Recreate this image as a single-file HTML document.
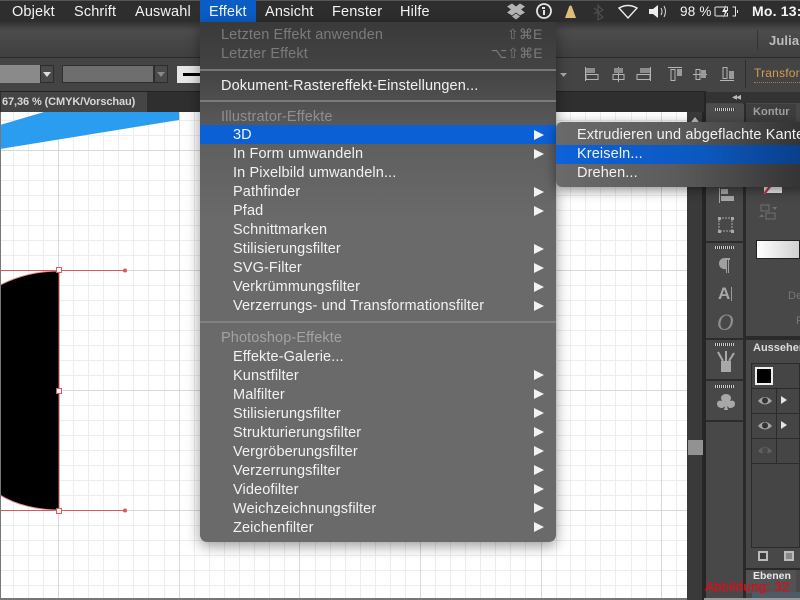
<!DOCTYPE html>
<html><head><meta charset="utf-8">
<style>
html,body{margin:0;padding:0;width:800px;height:600px;overflow:hidden;background:#444}
#s{position:relative;width:800px;height:600px;overflow:hidden;font-family:"Liberation Sans",sans-serif;filter:blur(.35px)}
.a{position:absolute}
.t{position:absolute;white-space:nowrap;font-size:14.5px;line-height:19px;color:#f2f2f2;letter-spacing:.12px}
.t:not([style*="font-size"]){margin-top:1px}
.mb{color:#f4f4f4;line-height:22px;top:0;font-size:14.5px;letter-spacing:.15px}
.d{color:#7b7b7b}
.g{color:#8f8f8f}
.tr{position:absolute;left:534px;width:0;height:0;border-left:10px solid #f2f2f2;border-top:5px solid transparent;border-bottom:5px solid transparent}
.sep{position:absolute;left:200px;width:356px;height:2px;background:#8a8a8a;opacity:.75}
</style></head><body><div id="s">

<!-- toolbars -->
<div class="a" style="left:0;top:22px;width:800px;height:35px;background:linear-gradient(#333,#4c4c4c 25%,#3f3f3f)"></div>
<div class="a" style="left:0;top:57px;width:800px;height:34px;background:#444;border-top:1px solid #2a2a2a"></div>
<div class="a" style="left:0;top:91px;width:706px;height:21px;background:#2f2f2f;border-top:1px solid #222"></div>
<div class="a" style="left:1px;top:92px;width:146px;height:20px;background:#454545"></div>
<div class="t" style="left:2px;top:93px;font-size:11px;font-weight:bold;color:#d8d8d8;letter-spacing:-.1px">67,36 % (CMYK/Vorschau)</div>

<div class="a" style="left:0;top:65px;width:40px;height:18px;background:#8a8a8a"></div>
<div class="a" style="left:40px;top:65px;width:14px;height:18px;background:#4a4a4a;border:1px solid #2c2c2c;box-sizing:border-box"></div>
<div class="a" style="left:43px;top:72px;border-top:5px solid #ddd;border-left:4px solid transparent;border-right:4px solid transparent"></div>
<div class="a" style="left:62px;top:65px;width:92px;height:18px;background:#6e6e6e;border:1px solid #2f2f2f;box-sizing:border-box"></div>
<div class="a" style="left:154px;top:65px;width:14px;height:18px;background:#4a4a4a;border:1px solid #2c2c2c;box-sizing:border-box"></div>
<div class="a" style="left:157px;top:72px;border-top:5px solid #888;border-left:4px solid transparent;border-right:4px solid transparent"></div>
<div class="a" style="left:177px;top:66px;width:24px;height:17px;background:#e6e6e6"></div>
<div class="a" style="left:183px;top:73px;width:18px;height:3px;background:#000"></div>

<svg class="a" style="left:556px;top:22px" width="244" height="90" fill="none" stroke="#b5b5b5" stroke-width="1">
  <path d="M4 51h7l-3.500 4z" fill="#aaa" stroke="none"/>
  <path d="M29.500 45v14M30 52.500h12v5H30z"/><rect x="30" y="46" width="9" height="5" fill="#8c8c8c" stroke="none"/>
  <path d="M62.500 45v15M57 52.500h11v5H57z"/><rect x="58" y="46" width="9" height="5" fill="#8c8c8c" stroke="none"/>
  <path d="M94.500 45v14M81 52.500h13v5H81z"/><rect x="84" y="46" width="10" height="5" fill="#8c8c8c" stroke="none"/>
  <path d="M112 45.500h14M115 47.500h4v11h-4z"/><rect x="121" y="47" width="5" height="7" fill="#9a9a9a" stroke="none"/>
  <path d="M137 52.500h14M140 47.500h4v10h-4z"/><rect x="145" y="48" width="5" height="8" fill="#9a9a9a" stroke="none"/>
  <path d="M164 58.500h14M167 45.500h4v11h-4z"/><rect x="173" y="49" width="5" height="8" fill="#9a9a9a" stroke="none"/>
  <path d="M189.500 38v28" stroke="#2e2e2e"/><path d="M201.500 8v20" stroke="#333"/>
</svg>
<div class="t" style="left:754px;top:65px;font-size:12px;color:#d99a4e;letter-spacing:.2px;border-bottom:1px dotted #a87a40;line-height:17px">Transform</div>
<div class="t" style="left:769px;top:31px;font-size:13px;font-weight:bold;color:#bcbcbc">Julia</div>

<!-- canvas -->
<svg class="a" style="left:0;top:112px" width="688" height="488">
  <rect x="0" y="0" width="688" height="488" fill="#fff"/>
  <g id="grid" stroke="#ededed" stroke-width="1">
    <path d="M13.500 0v488M28.500 0v488M43.500 0v488M73.500 0v488M88.500 0v488M103.500 0v488M118.500 0v488M133.500 0v488M148.500 0v488M164.500 0v488M194.500 0v488M209.500 0v488M224.500 0v488M239.500 0v488M254.500 0v488M269.500 0v488M284.500 0v488M315.500 0v488M330.500 0v488M345.500 0v488M360.500 0v488M375.500 0v488M390.500 0v488M405.500 0v488M435.500 0v488M450.500 0v488M465.500 0v488M480.500 0v488M495.500 0v488M510.500 0v488M525.500 0v488M556.500 0v488M570.500 0v488M585.500 0v488M600.500 0v488M615.500 0v488M631.500 0v488M646.500 0v488M676.500 0v488"/>
    <path d="M0 8.500h688M0 23.500h688M0 53.500h688M0 68.500h688M0 83.500h688M0 98.500h688M0 113.500h688M0 128.500h688M0 143.500h688M0 173.500h688M0 188.500h688M0 203.500h688M0 218.500h688M0 233.500h688M0 248.500h688M0 263.500h688M0 293.500h688M0 308.500h688M0 323.500h688M0 338.500h688M0 353.500h688M0 368.500h688M0 383.500h688M0 413.500h688M0 428.500h688M0 443.500h688M0 458.500h688M0 473.500h688"/>
  </g>
  <g stroke="#d9d9d9" stroke-width="1">
    <path d="M58.500 0v488M179.500 0v488M299.500 0v488M420.500 0v488M541.500 0v488M661.500 0v488"/>
    <path d="M0 38.500h688M0 158.500h688M0 278.500h688M0 398.500h688"/>
  </g>
  <path d="M0 13L44 0H179V8L0 37Z" fill="#2a9df0"/>
  <path d="M0 173C18 164 38 159 59 159V398C38 398 16 393 0 383Z" fill="#000"/>
  <path d="M0 158.500H125M0 398.500H125M59 158V399" stroke="#d9595c" stroke-width="1" fill="none"/>
  <path d="M0 173C18 164 38 159 59 159M0 383C16 393 38 398 59 398" stroke="#e58a8a" stroke-width="1" fill="none"/>
  <circle cx="125" cy="158.500" r="2" fill="#d9595c"/><circle cx="125" cy="398.500" r="2" fill="#d9595c"/>
  <g fill="#fff" stroke="#d9595c"><rect x="56.500" y="155.500" width="5" height="5"/><rect x="56.500" y="276.500" width="5" height="5"/><rect x="56.500" y="396.500" width="5" height="5"/></g>
</svg>
<div class="a" style="left:0;top:112px;width:1px;height:488px;background:#777"></div>
<div class="a" style="left:0;top:598px;width:700px;height:2px;background:#777"></div>

<!-- scrollbar -->
<div class="a" style="left:687px;top:112px;width:17px;height:488px;background:#3a3a3a;border-right:2px solid #262626;box-sizing:border-box"></div>
<div class="a" style="left:688px;top:440px;width:15px;height:15px;background:#929292"></div>
<div class="a" style="left:691px;top:117px;border-bottom:5px solid #bbb;border-left:4px solid transparent;border-right:4px solid transparent"></div>

<!-- right dock -->
<div class="a" style="left:704px;top:92px;width:96px;height:508px;background:#484848"></div>
<div class="a" style="left:704px;top:92px;width:2px;height:508px;background:#252525"></div>
<div class="a" style="left:743px;top:92px;width:3px;height:508px;background:#2a2a2a"></div>
<div class="a" style="left:706px;top:92px;width:94px;height:11px;background:#333"></div>
<div class="a" style="left:732px;top:94px;font-size:6.5px;line-height:8px;color:#bbb;letter-spacing:-1px">◀◀</div>
<div class="a" style="left:706px;top:104px;width:38px;height:20px;background:#4c4c4c"></div>
<div class="a" style="left:715px;top:108px;width:20px;height:3px;background:repeating-linear-gradient(90deg,#ccc 0 1px,#333 1px 2px)"></div>
<div class="a" style="left:746px;top:104px;width:50px;height:20px;background:#3e3e3e"></div>
<div class="t" style="left:753px;top:103px;font-size:11px;font-weight:bold;color:#a0a0a0;letter-spacing:.1px">Kontur</div>

<div class="a" style="left:706px;top:241px;width:38px;height:2px;background:#2c2c2c"></div>
<div class="a" style="left:706px;top:338px;width:38px;height:2px;background:#2c2c2c"></div>
<div class="a" style="left:706px;top:379px;width:38px;height:2px;background:#2c2c2c"></div>
<div class="a" style="left:706px;top:420px;width:38px;height:2px;background:#2c2c2c"></div>
<div class="a" style="left:715px;top:246px;width:19px;height:3px;background:repeating-linear-gradient(90deg,#ccc 0 1px,#333 1px 2px)"></div>
<div class="a" style="left:715px;top:343px;width:19px;height:3px;background:repeating-linear-gradient(90deg,#ccc 0 1px,#333 1px 2px)"></div>
<div class="a" style="left:715px;top:385px;width:19px;height:3px;background:repeating-linear-gradient(90deg,#ccc 0 1px,#333 1px 2px)"></div>

<svg class="a" style="left:706px;top:180px" width="40" height="250" fill="#a8a8a8">
  <path d="M13 8h1v15h-1zM15 9h7v5h-7zM15 16h13v5H15z"/>
  <rect x="13" y="38" width="13" height="13" fill="none" stroke="#a8a8a8" stroke-dasharray="2 1"/><rect x="12" y="37" width="3" height="3"/><rect x="25" y="37" width="3" height="3"/><rect x="12" y="50" width="3" height="3"/><rect x="25" y="50" width="3" height="3"/>
  <path d="M13 84a5.500 5.500 0 0 1 5-6h6v2h-1v13h-1V80h-1v13h-1V89a5.500 5.500 0 0 1-7-5z" fill="#a0a0a0"/>
  <path d="M25.500 107v14" stroke="#9a9a9a" fill="none"/>
  <rect x="15" y="181" width="10" height="11" fill="#a8a8a8"/>
  <path d="M17 181l-5-9M20 181v-10M23 181l5-8" stroke="#a8a8a8" stroke-width="2" fill="none"/>
  <path d="M20 214c-3 0-5 2-5 4 0 1 .5 2 1 3-3-1-5 0-5 3s3 4 5 4c1 0 2-1 3-2l-1 4h4l-1-4c1 1 2 2 3 2 2 0 5-1 5-4s-2-4-5-3c.5-1 1-2 1-3 0-2-2-4-5-4z" fill="#a8a8a8"/>
</svg>
<div class="t" style="left:718px;top:283px;font-size:17px;line-height:22px;font-weight:bold;color:#a8a8a8;letter-spacing:0">A</div>
<div class="t" style="left:717px;top:311px;font-family:'Liberation Serif',serif;font-size:23px;line-height:24px;font-style:italic;color:#8e8e8e;letter-spacing:0">O</div>

<!-- right panel content -->
<div class="a" style="left:764px;top:184px;width:18px;height:9px;background:#eee"></div>
<svg class="a" style="left:762px;top:183px" width="24" height="12"><path d="M2 11L10 1" stroke="#c23b4a" stroke-width="2.500"/></svg>
<svg class="a" style="left:758px;top:204px" width="22" height="16" fill="none" stroke="#6f6f6f"><rect x="3" y="1" width="8" height="6"/><rect x="8" y="9" width="9" height="6"/><path d="M14 3h5l-2 3z" fill="#6f6f6f" stroke="none"/><path d="M1 13h5l-2-3z" fill="#6f6f6f" stroke="none"/></svg>
<div class="a" style="left:756px;top:240px;width:44px;height:19px;background:linear-gradient(90deg,#fff,#d0d0d0);border:1px solid #222;box-sizing:border-box"></div>
<div class="t" style="left:788px;top:287px;font-size:11px;color:#777">De</div>
<div class="t" style="left:796px;top:312px;font-size:11px;color:#777">F</div>

<div class="a" style="left:746px;top:336px;width:54px;height:4px;background:#2a2a2a"></div>
<div class="t" style="left:753px;top:339px;font-size:11px;font-weight:bold;color:#dcdcdc;letter-spacing:0">Aussehen</div>
<div class="a" style="left:751px;top:363px;width:49px;height:185px;border:1px solid #2b2b2b;box-sizing:border-box;background:#454545"></div>
<div class="a" style="left:751px;top:388px;width:49px;height:1px;background:#2b2b2b"></div>
<div class="a" style="left:751px;top:413px;width:49px;height:1px;background:#2b2b2b"></div>
<div class="a" style="left:751px;top:438px;width:49px;height:1px;background:#2b2b2b"></div>
<div class="a" style="left:751px;top:463px;width:49px;height:1px;background:#2b2b2b"></div>
<div class="a" style="left:776px;top:388px;width:1px;height:75px;background:#2b2b2b"></div>
<div class="a" style="left:755px;top:367px;width:18px;height:18px;background:#000;border:2px solid #eee;box-sizing:border-box"></div>
<svg class="a" style="left:757px;top:393px" width="16" height="60">
  <path d="M1 8Q8 0 15 8Q8 15 1 8Z" fill="#a5a5a5"/><circle cx="8" cy="7.500" r="3" fill="#333"/>
  <path d="M1 33Q8 25 15 33Q8 40 1 33Z" fill="#a5a5a5"/><circle cx="8" cy="32.500" r="3" fill="#333"/>
  <path d="M1 58Q8 50 15 58Q8 65 1 58Z" fill="#606060"/><circle cx="8" cy="57.500" r="3" fill="#4a4a4a"/>
</svg>
<div class="a" style="left:781px;top:396px;border-left:6px solid #e4e4e4;border-top:4px solid transparent;border-bottom:4px solid transparent"></div>
<div class="a" style="left:781px;top:421px;border-left:6px solid #e4e4e4;border-top:4px solid transparent;border-bottom:4px solid transparent"></div>
<div class="a" style="left:758px;top:551px;width:10px;height:10px;border:2px solid #bbb;box-sizing:border-box;background:#3c3c3c"></div>
<div class="a" style="left:784px;top:551px;width:10px;height:10px;border:2px solid #bbb;box-sizing:border-box;background:#888"></div>
<div class="a" style="left:746px;top:568px;width:54px;height:2px;background:#2a2a2a"></div>
<div class="a" style="left:746px;top:570px;width:50px;height:23px;background:#525252"></div>
<div class="t" style="left:753px;top:567px;font-size:10.500px;font-weight:bold;color:#e8e8e8;letter-spacing:0">Ebenen</div>
<div class="a" style="left:752px;top:592px;width:48px;height:6px;background:#4e5a68"></div>
<div class="a" style="left:704px;top:598px;width:96px;height:2px;background:#999"></div>
<div class="t" style="left:705px;top:577px;font-size:13px;color:#d8101a;letter-spacing:.4px;-webkit-text-stroke:.35px #d8101a">Abbildung: 32</div>

<!-- menubar -->
<div class="a" style="left:0;top:0;width:800px;height:22px;background:#2e2e2e;border-top:1px solid #555;box-sizing:border-box"></div>
<div class="a" style="left:200px;top:0;width:56px;height:22px;background:#0b5cc4"></div>
<div class="t mb" style="left:12px">Objekt</div>
<div class="t mb" style="left:74px">Schrift</div>
<div class="t mb" style="left:135px">Auswahl</div>
<div class="t mb" style="left:209px">Effekt</div>
<div class="t mb" style="left:265px">Ansicht</div>
<div class="t mb" style="left:332px">Fenster</div>
<div class="t mb" style="left:400px">Hilfe</div>
<svg class="a" style="left:506px;top:2px" width="240" height="20" fill="none">
  <path d="M2 5l5-3 4 3 4-3 5 3-4 3 4 3-5 3-4-3-4 3-5-3 4-3zM7 15l4-3 4 3-4 3z" fill="#b5b5b5" transform="translate(-1,-.5)"/>
  <circle cx="38" cy="9" r="7" stroke="#e6e6e6" stroke-width="1.800"/><path d="M36 5h3v2h-3zM37 8h2v5h-2z" fill="#e6e6e6"/>
  <path d="M59 16l4-11c.5-2 2.500-2 3 0l4 11z" fill="#e0bd7a"/>
  <path d="M89 4l5 4-5 3 5 4-5 3V2M85 6l4 3-4 3" stroke="#4e4e4e" stroke-width="1.200" transform="translate(3,0)"/>
  <path d="M113 6Q122 1 131 6L122 16Z" stroke="#ececec" stroke-width="1.400"/>
  <path d="M143 7h4l5-4v13l-5-4h-4z" fill="#eee"/><path d="M155 6q2 3.500 0 7M158 4q3 5.500 0 11" stroke="#ddd"/>
  <path d="M209.500 5h12v4M209.500 14h12v-3M209 5v9M226.500 5h3v9h-3" stroke="#e6e6e6"/><path d="M220 3l-4 7h3l-2 6 5-8h-3z" fill="#eee"/><rect x="231" y="8" width="1" height="3" fill="#ddd"/>
</svg>
<div class="t mb" style="left:680px;font-size:13.500px;letter-spacing:.2px;top:1px">98 %</div>
<div class="t mb" style="left:752px;font-weight:bold;font-size:14px;letter-spacing:.2px">Mo. 13:</div>

<!-- main menu -->
<div class="a" style="left:200px;top:22px;width:356px;height:520px;border-radius:0 0 7px 7px;background:linear-gradient(#3a3a3a,#444 50px,#5e5e5e 115px,#6a6a6a 200px,#6a6a6a);box-shadow:0 4px 14px rgba(0,0,0,.4)"></div>
<div class="sep" style="top:69px"></div>
<div class="sep" style="top:100px"></div>
<div class="sep" style="top:321px"></div>
<div class="a" style="left:200px;top:125px;width:356px;height:19px;background:#0c60d6"></div>

<div class="t d" style="left:221px;top:25px">Letzten Effekt anwenden</div>
<div class="t d" style="left:221px;top:44px">Letzter Effekt</div>
<div class="t d" style="left:507px;top:25px;font-size:14px">⇧⌘E</div>
<div class="t d" style="left:491px;top:44px;font-size:14px">⌥⇧⌘E</div>
<div class="t" style="left:221px;top:76px">Dokument-Rastereffekt-Einstellungen...</div>
<div class="t g" style="left:221px;top:107px">Illustrator-Effekte</div>
<div class="t" style="left:233px;top:125px">3D</div>
<div class="t" style="left:233px;top:144px">In Form umwandeln</div>
<div class="t" style="left:233px;top:163px">In Pixelbild umwandeln...</div>
<div class="t" style="left:233px;top:182px">Pathfinder</div>
<div class="t" style="left:233px;top:201px">Pfad</div>
<div class="t" style="left:233px;top:220px">Schnittmarken</div>
<div class="t" style="left:233px;top:239px">Stilisierungsfilter</div>
<div class="t" style="left:233px;top:258px">SVG-Filter</div>
<div class="t" style="left:233px;top:277px">Verkrümmungsfilter</div>
<div class="t" style="left:233px;top:296px">Verzerrungs- und Transformationsfilter</div>
<div class="t g" style="left:221px;top:328px;color:#a3a3a3">Photoshop-Effekte</div>
<div class="t" style="left:233px;top:347px">Effekte-Galerie...</div>
<div class="t" style="left:233px;top:366px">Kunstfilter</div>
<div class="t" style="left:233px;top:385px">Malfilter</div>
<div class="t" style="left:233px;top:404px">Stilisierungsfilter</div>
<div class="t" style="left:233px;top:423px">Strukturierungsfilter</div>
<div class="t" style="left:233px;top:442px">Vergröberungsfilter</div>
<div class="t" style="left:233px;top:461px">Verzerrungsfilter</div>
<div class="t" style="left:233px;top:480px">Videofilter</div>
<div class="t" style="left:233px;top:499px">Weichzeichnungsfilter</div>
<div class="t" style="left:233px;top:518px">Zeichenfilter</div>

<div class="tr" style="top:130px"></div><div class="tr" style="top:149px"></div>
<div class="tr" style="top:187px"></div><div class="tr" style="top:206px"></div>
<div class="tr" style="top:244px"></div><div class="tr" style="top:263px"></div>
<div class="tr" style="top:282px"></div><div class="tr" style="top:301px"></div>
<div class="tr" style="top:370px"></div><div class="tr" style="top:389px"></div>
<div class="tr" style="top:408px"></div><div class="tr" style="top:427px"></div>
<div class="tr" style="top:446px"></div><div class="tr" style="top:465px"></div>
<div class="tr" style="top:484px"></div><div class="tr" style="top:503px"></div>
<div class="tr" style="top:522px"></div>

<!-- submenu -->
<div class="a" style="left:556px;top:122px;width:260px;height:65px;border-radius:6px 0 0 6px;background:linear-gradient(90deg,#6a6a6a,#5c5c5c 45%,#2f2f2f 100%);box-shadow:0 3px 12px rgba(0,0,0,.45)"></div>
<div class="a" style="left:556px;top:145px;width:244px;height:19px;background:linear-gradient(90deg,#0c62da,#0c58c0 60%,#0a3f8a)"></div>
<div class="t" style="left:577px;top:125px">Extrudieren und abgeflachte Kanten...</div>
<div class="t" style="left:577px;top:144px">Kreiseln...</div>
<div class="t" style="left:577px;top:163px">Drehen...</div>

</div></body></html>
